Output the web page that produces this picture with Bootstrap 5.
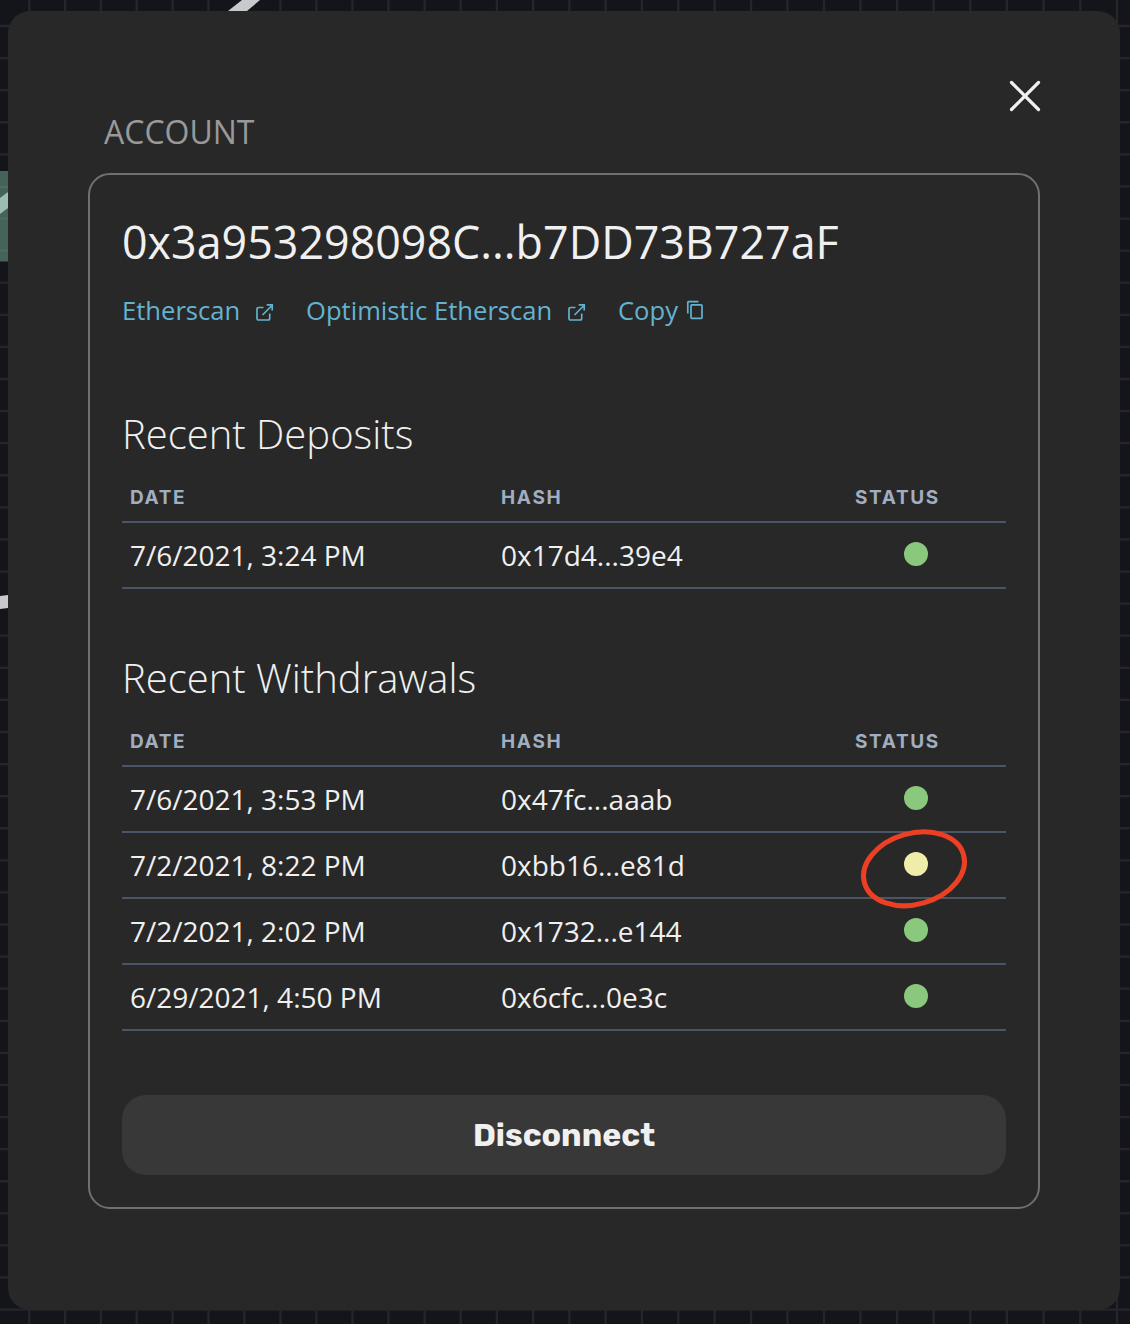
<!DOCTYPE html>
<html lang="en">
<head>
<meta charset="utf-8">
<meta name="viewport" content="width=device-width, initial-scale=1">
<title>Account</title>
<link href="https://cdn.jsdelivr.net/npm/bootstrap@5.3.0/dist/css/bootstrap.min.css" rel="stylesheet">
<style>
body{background:#14151a;font-family:"Open Sans","Noto Sans",sans-serif;color:#f0f0f0;height:1324px;overflow:hidden}
.backdrop-art{position:absolute;inset:0;z-index:-1}
.account-dialog{margin:11px 10px 0 8px;height:1299px;background:#282828;border-radius:22px;padding:66px 80px 0}
.dialog-top{height:96px;padding-left:16px}
.dialog-label{font-size:32px;line-height:44px;color:#999;margin-top:33px}
.close-x{width:38px;height:38px;margin-right:-4px}
.panel{height:1036px;border:2px solid #707070;border-radius:22px;padding:32px}
.address{font-size:44.8px;line-height:70px;margin:0;white-space:nowrap}
.link-row{height:40px;margin-top:14px;font-size:25.6px;line-height:40px;white-space:nowrap}
.link-row a{color:#63b3d0;text-decoration:none}
.link-etherscan{width:184px}
.link-optimistic{width:312px}
.ext{margin:4px 0 0 15px}
.dup{margin:-2px 0 0 8px}
.section-title{font-size:40px;font-weight:300;line-height:56px;margin:61px 0 0;white-space:nowrap}
.first-title{margin-top:75px}
.tx{table-layout:fixed;margin:11px 0 0;width:884px;color:#f0f0f0;--bs-table-bg:transparent;--bs-table-color:#f0f0f0}
.col-date{width:371px}
.col-hash{width:333px}
.tx th,.tx td{border-bottom:2px solid #4a5568;padding:0 8px;white-space:nowrap}
.tx th{height:49px;font:700 19px/47px Inter,sans-serif;color:#a0aec0;letter-spacing:1.65px;vertical-align:middle}
.tx .state-head{padding-left:29px}
.tx td{height:66px;font-size:28px;line-height:64px}
.tx .state{text-align:center;position:relative}
.dot{display:block;width:24px;height:24px;border-radius:50%;background:#8ac97d;margin:19px auto 0}
.dot-wait{background:#efeda9}
.ring{position:absolute;left:36px;top:-6px;width:112px;height:86px;overflow:visible}
.disconnect{height:80px;border-radius:24px;background:#383838;color:#f0f0f0;font:700 32px/44px Rubik,Inter,sans-serif;border:0}
</style>
</head>
<body>
<svg class="backdrop-art" width="1130" height="1324" fill="none">
<path id="mesh" stroke="#25262b" stroke-width="2.300"/>
<path d="M0 171H8V261.500H0Z" fill="#456358"/>
<path d="M0 187H8M0 218.500H8M0 250.500H8" stroke="#4e6e61" stroke-width="2"/>
<path d="M0 198L8 192V208L0 214Z" fill="#9dbdb2"/>
<path d="M242 0H260L247 11H228Z" fill="#c8c9cd"/>
<path d="M0 596L8 595V608L0 609Z" fill="#c8c9cd"/>
</svg>
<main class="account-dialog">
<div class="dialog-top d-flex justify-content-between align-items-start">
<div class="dialog-label">ACCOUNT</div>
<svg class="close-x" viewBox="0 0 38 38" stroke="#f0f0f0" stroke-width="3.200" stroke-linecap="round"><path d="M5.500 5.500L32.500 32.500M32.500 5.500L5.500 32.500"/></svg>
</div>
<section class="panel d-flex flex-column">
<h1 class="address fw-normal">0x3a953298098C...b7DD73B727aF</h1>
<nav class="link-row d-flex">
<a href="#" class="link-etherscan d-flex align-items-center"><span>Etherscan</span><svg class="ext" width="20" height="20" viewBox="0 0 20 20" fill="none" stroke="currentColor" stroke-width="1.700"><path d="M8.500 4.500H3.700Q2 4.500 2 6.200V15.300Q2 17 3.700 17H13Q14.700 17 14.700 15.300V10.500M7.500 12L17 2.500M11.700 1.800H17.200V7.500"/></svg></a>
<a href="#" class="link-optimistic d-flex align-items-center"><span>Optimistic Etherscan</span><svg class="ext" width="20" height="20" viewBox="0 0 20 20" fill="none" stroke="currentColor" stroke-width="1.700"><path d="M8.500 4.500H3.700Q2 4.500 2 6.200V15.300Q2 17 3.700 17H13Q14.700 17 14.700 15.300V10.500M7.500 12L17 2.500M11.700 1.800H17.200V7.500"/></svg></a>
<a href="#" class="d-flex align-items-center"><span>Copy</span><svg class="dup" width="18" height="20" viewBox="0 0 18 20" fill="none" stroke="currentColor" stroke-width="1.700"><path d="M1.800 13.500V2.300Q1.800 1.600 2.500 1.600H12.500"/><rect x="5" y="4.800" width="11" height="13.500" rx=".8"/></svg></a>
</nav>
<h2 class="section-title first-title">Recent Deposits</h2>
<table class="table tx">
<colgroup><col class="col-date"><col class="col-hash"><col></colgroup>
<thead><tr><th>DATE</th><th>HASH</th><th class="state-head">STATUS</th></tr></thead>
<tbody><tr><td>7/6/2021, 3:24 PM</td><td>0x17d4...39e4</td><td class="state"><span class="dot"></span></td></tr></tbody>
</table>
<h2 class="section-title">Recent Withdrawals</h2>
<table class="table tx">
<colgroup><col class="col-date"><col class="col-hash"><col></colgroup>
<thead><tr><th>DATE</th><th>HASH</th><th class="state-head">STATUS</th></tr></thead>
<tbody>
<tr><td>7/6/2021, 3:53 PM</td><td>0x47fc...aaab</td><td class="state"><span class="dot"></span></td></tr>
<tr><td>7/2/2021, 8:22 PM</td><td>0xbb16...e81d</td><td class="state"><span class="dot dot-wait"></span><svg class="ring" viewBox="0 0 112 86"><ellipse cx="52" cy="41.800" rx="51.500" ry="35.500" transform="rotate(-16 52 41.800)" fill="none" stroke="#ec3f24" stroke-width="5"/></svg></td></tr>
<tr><td>7/2/2021, 2:02 PM</td><td>0x1732...e144</td><td class="state"><span class="dot"></span></td></tr>
<tr><td>6/29/2021, 4:50 PM</td><td>0x6cfc...0e3c</td><td class="state"><span class="dot"></span></td></tr>
</tbody>
</table>
<button class="btn disconnect w-100 mt-auto">Disconnect</button>
</section>
</main>
<script>
let d = '';
for (let i = 0; i <= 40; i++) d += `M0 ${26 + i * 32.09}H1130`;
for (let i = 0; i <= 30; i++) d += `M${29.3 + i * 35.75 + i * i * 0.0169} 0V1324`;
document.getElementById('mesh').setAttribute('d', d);
</script>
<script src="https://cdn.jsdelivr.net/npm/bootstrap@5.3.0/dist/js/bootstrap.bundle.min.js"></script>
</body>
</html>
